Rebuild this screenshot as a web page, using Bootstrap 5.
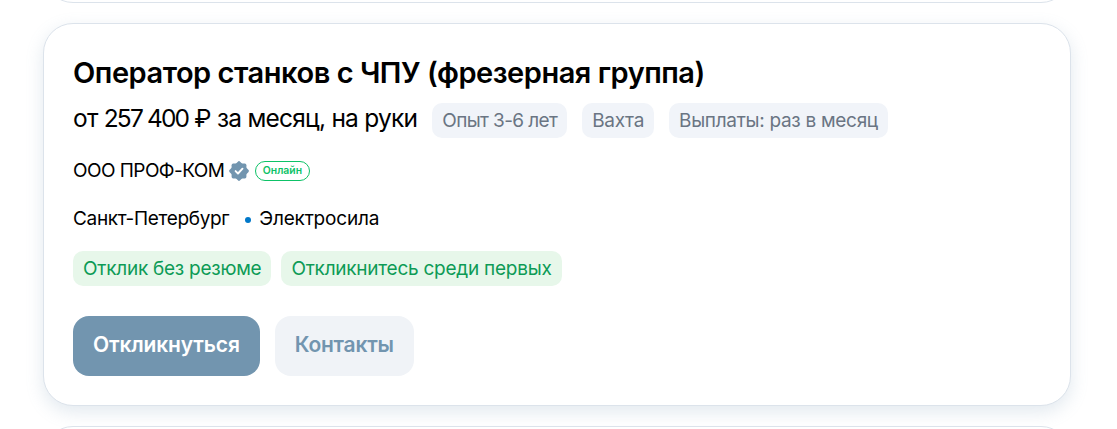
<!DOCTYPE html>
<html lang="ru">
<head>
<meta charset="utf-8">
<title>Вакансии</title>
<link href="https://cdn.jsdelivr.net/npm/bootstrap@5.3.0/dist/css/bootstrap.min.css" rel="stylesheet">
<script src="https://cdn.jsdelivr.net/npm/bootstrap@5.3.0/dist/js/bootstrap.bundle.min.js"></script>
<style>
html,body{height:100%;overflow:hidden}
body{font-family:Inter,"Liberation Sans",sans-serif;color:#000;background:#fff}
.feed{padding:0 46px 0 43px;height:100vh;overflow:hidden;gap:20px}
.vacancy{border:1px solid #dce3eb;border-radius:30px;height:383px;flex:none;background:#fff;padding:30px 29px}
.vacancy.current{box-shadow:0 6px 18px rgba(112,146,173,.2)}
.vacancy.prev{margin-top:-380px}
.title{font-size:29px;font-weight:600;line-height:38px;letter-spacing:-.47px}
.conditions{margin-top:11px}
.pay{font-size:24.5px;line-height:31px;letter-spacing:-.78px;word-spacing:.1px;margin-right:15px}
.pay .digits{letter-spacing:-1.85px}
.pay .thousands{margin-right:5px}
.marks{gap:15px}
.tag{font-size:19px;line-height:35px;height:35px;border-radius:10px;padding:0 10px;background:#f1f4f9;color:#6a7583;letter-spacing:-.3px}
.tag.tight{letter-spacing:-.62px}
.tag.green{background:#e7f7ea;color:#0d9b56;letter-spacing:-.25px}
.company,.place{font-size:19px;line-height:28px}
.company{margin-top:19px;letter-spacing:-.55px}
.place{margin-top:20px;letter-spacing:-.33px}
.metro{letter-spacing:-.2px}
.metro-dot{width:6px;height:6px;background:#0078c9;margin:1px 8px 0 16px}
.verified{margin-left:5px;margin-right:.5px}
.online{font-size:10.4px;font-weight:600;letter-spacing:0;color:#0dc267;border:1.4px solid #0dc267;border-radius:10px;width:55px;height:20px;margin-left:5px}
.perks{margin-top:18px;gap:10px}
.actions{margin-top:30px;gap:15px}
.action{--bs-btn-border-width:0;height:60px;--bs-btn-border-radius:16px;--bs-btn-font-size:21px;--bs-btn-font-weight:600;--bs-btn-padding-x:20px;--bs-btn-padding-y:0;letter-spacing:-.15px;padding-bottom:2px}
.apply,.apply:hover{background:#7295af;color:#fff}
.contacts,.contacts:hover{background:#f0f3f7;color:#7295af;letter-spacing:-.23px}
</style>
</head>
<body>
<main class="feed d-flex flex-column">
  <section class="vacancy prev"></section>
  <article class="vacancy current">
    <h2 class="title m-0">Оператор станков с ЧПУ (фрезерная группа)</h2>
    <div class="conditions d-flex align-items-start">
      <span class="pay">от <span class="digits thousands">257</span><span class="digits">400</span> ₽ за месяц, на руки</span>
      <div class="marks d-flex">
        <span class="tag tight">Опыт 3-6 лет</span>
        <span class="tag">Вахта</span>
        <span class="tag">Выплаты: раз в месяц</span>
      </div>
    </div>
    <div class="company d-flex align-items-center">
      <span>ООО ПРОФ-КОМ</span>
      <svg class="verified" width="20" height="20" viewBox="0 0 20 20"><g fill="#7295af"><rect x="2.6" y="2.6" width="14.8" height="14.8" rx="1.6"/><rect x="2.6" y="2.6" width="14.8" height="14.8" rx="1.6" transform="rotate(45 10 10)"/></g><path fill="none" stroke="#fff" stroke-width="1.9" stroke-linecap="round" stroke-linejoin="round" d="M6.6 10.1l2.4 2.4 4.5-4.8"/></svg>
      <span class="online d-flex align-items-center justify-content-center">Онлайн</span>
    </div>
    <div class="place d-flex align-items-center">
      <span>Санкт-Петербург</span><span class="metro-dot rounded-circle"></span><span class="metro">Электросила</span>
    </div>
    <div class="perks d-flex">
      <span class="tag green">Отклик без резюме</span>
      <span class="tag green">Откликнитесь среди первых</span>
    </div>
    <div class="actions d-flex">
      <button type="button" class="btn action apply">Откликнуться</button>
      <button type="button" class="btn action contacts">Контакты</button>
    </div>
  </article>
  <section class="vacancy next"></section>
</main>
</body>
</html>
